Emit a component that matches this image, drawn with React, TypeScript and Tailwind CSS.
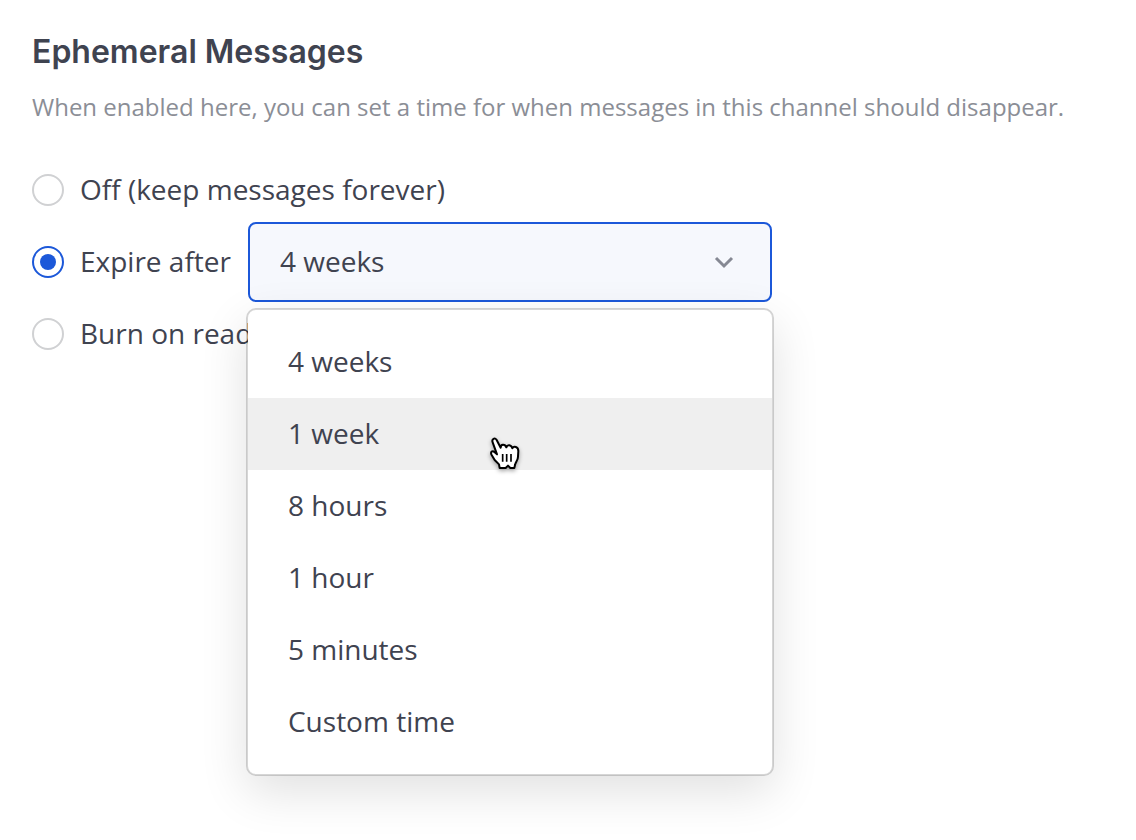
import { useState } from "react";

type Mode = "off" | "expire" | "burn";

const durations = ["4 weeks", "1 week", "8 hours", "1 hour", "5 minutes", "Custom time"];

interface RadioProps {
  id: Mode;
  label: string;
  mode: Mode;
  onChange: (mode: Mode) => void;
}

const Radio = ({ id, label, mode, onChange }: RadioProps) => (
  <div className="flex shrink-0 items-center gap-4">
    <input
      type="radio"
      id={id}
      name="ephemeral-mode"
      checked={mode === id}
      onChange={() => onChange(id)}
      className="grid size-8 shrink-0 appearance-none place-items-center rounded-full border-2 border-[#d0d1d3] bg-white before:size-4 before:rounded-full before:bg-transparent before:content-[''] checked:border-[#1c58d9] checked:before:bg-[#1c58d9]"
    />
    <label htmlFor={id} className="pb-0.5 whitespace-nowrap">
      {label}
    </label>
  </div>
);

const HandPointer = () => (
  <svg
    viewBox="0 0 105 120"
    className="pointer-events-none absolute top-9 left-[240px] z-20 h-10 w-[35px] drop-shadow-[0_2px_2px_rgba(0,0,0,0.35)]"
    aria-hidden="true"
  >
    <path
      d="M14 25 C10 15 21 9 26 18 L38 41 C38 30 51 29 55 40 C58 31 70 32 73 43 C77 35 91 38 91 51 L90 68 C90 79 82 85 81 93 L79 102 L67 102 L60 95 L53 102 L35 102 L33 91 L20 78 L11 63 C6 53 13 49 20 55 L27 61 Z"
      fill="white"
      stroke="black"
      strokeWidth="6"
      strokeLinejoin="round"
    />
    <path d="M44 60V83M56 60V83M69 60V83" stroke="black" strokeWidth="5" fill="none" />
  </svg>
);

const App = () => {
  const [mode, setMode] = useState<Mode>("expire");
  const [duration, setDuration] = useState("4 weeks");
  const [open, setOpen] = useState(true);
  const [active, setActive] = useState("1 week");

  const choose = (value: string) => {
    setDuration(value);
    setOpen(false);
  };

  return (
    <main className="min-h-screen bg-white p-8 font-['Open_Sans',sans-serif] text-[#3f4350]">
      <h1 className="font-['Inter',sans-serif] text-[32px] leading-10 font-semibold">Ephemeral Messages</h1>
      <p className="mt-5 text-2xl leading-[30px] text-[#8b8e96]">
        When enabled here, you can set a time for when messages in this channel should disappear.
      </p>

      <fieldset aria-label="Message expiry" className="mt-8 min-w-0 text-[28px] leading-10">
        <div className="flex h-[72px] items-center">
          <Radio id="off" label="Off (keep messages forever)" mode={mode} onChange={setMode} />
        </div>

        <div className="flex h-[72px] items-center gap-[17px]">
          <Radio id="expire" label="Expire after" mode={mode} onChange={setMode} />
          <div className="relative w-full max-w-[524px]">
            <select
              aria-label="Expire after"
              value={duration}
              onChange={(e) => setDuration(e.target.value)}
              onMouseDown={(e) => {
                // the styled list below replaces the native popup
                e.preventDefault();
                setOpen(!open);
              }}
              className="block h-20 w-full appearance-none rounded-lg border-2 border-[#1c58d9] bg-[#f6f8fd] pr-20 pb-0.5 pl-[30px] outline-none"
            >
              {durations.map((item) => (
                <option key={item}>{item}</option>
              ))}
            </select>
            <svg
              viewBox="0 0 24 24"
              className="pointer-events-none absolute inset-y-0 right-9 my-auto size-6"
              fill="none"
              stroke="#858893"
              strokeWidth="3"
              aria-hidden="true"
            >
              <path d="M4 8L12 16L20 8" />
            </svg>

            {open && (
              <div
                role="listbox"
                aria-label="Expiry time"
                className="absolute -inset-x-0.5 top-full z-10 mt-1.5 rounded-[10px] border-2 border-black/16 bg-white bg-clip-padding py-4 shadow-[0_16px_48px_rgba(0,0,0,0.12)]"
              >
                {durations.map((item) => (
                  <button
                    key={item}
                    type="button"
                    role="option"
                    aria-selected={item === duration}
                    onMouseEnter={() => setActive(item)}
                    onClick={() => choose(item)}
                    className={`relative block h-[72px] w-full cursor-pointer px-10 pb-0.5 text-left ${
                      item === active ? "bg-[#efefef]" : "bg-white"
                    }`}
                  >
                    {item}
                    {item === active && <HandPointer />}
                  </button>
                ))}
              </div>
            )}
          </div>
        </div>

        <div className="flex h-[72px] items-center">
          <Radio id="burn" label="Burn on read" mode={mode} onChange={setMode} />
        </div>
      </fieldset>
    </main>
  );
};

export default App;
